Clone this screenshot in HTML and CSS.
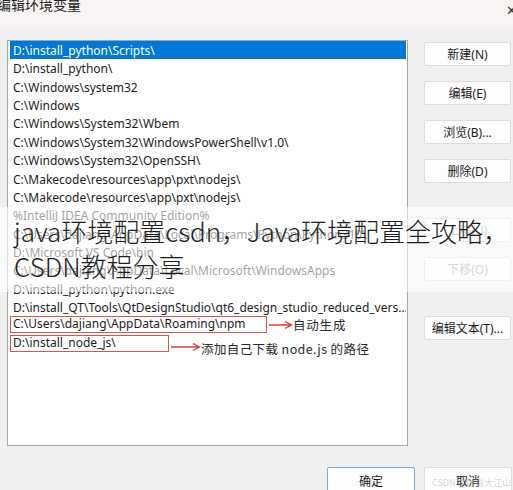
FILE: index.html
```html
<!DOCTYPE html>
<html lang="zh">
<head>
<meta charset="utf-8">
<link rel="stylesheet" href="styles.css">
</head>
<body>
<div class="dialog">
  <div class="titlebar">
    <span class="title">编辑环境变量</span>
    <span class="close">✕</span>
  </div>
  <div class="main">
    <div class="list">
      <div class="row sel">D:\install_python\Scripts\</div>
      <div class="row">D:\install_python\</div>
      <div class="row">C:\Windows\system32</div>
      <div class="row">C:\Windows</div>
      <div class="row">C:\Windows\System32\Wbem</div>
      <div class="row">C:\Windows\System32\WindowsPowerShell\v1.0\</div>
      <div class="row">C:\Windows\System32\OpenSSH\</div>
      <div class="row">C:\Makecode\resources\app\pxt\nodejs\</div>
      <div class="row">C:\Makecode\resources\app\pxt\nodejs\</div>
      <div class="row">%IntelliJ IDEA Community Edition%</div>
      <div class="row">C:\Users\dajiang\AppData\Local\Programs\Python\Python310\</div>
      <div class="row">D:\Microsoft VS Code\bin</div>
      <div class="row">C:\Users\dajiang\AppData\Local\Microsoft\WindowsApps</div>
      <div class="row">D:\install_python\python.exe</div>
      <div class="row">D:\install_QT\Tools\QtDesignStudio\qt6_design_studio_reduced_vers...</div>
      <div class="row note-row">
        <span class="mark mark-a">C:\Users\dajiang\AppData\Roaming\npm</span>
        <svg class="arrow arrow-a" viewBox="0 0 24 10"><path d="M0 5H22M16 1.5L22.5 5L16 8.5" fill="none" stroke="#d9413c" stroke-width="1.4"/></svg>
        <span class="note">自动生成</span>
      </div>
      <div class="row note-row">
        <span class="mark mark-b">D:\install_node_js\</span>
        <svg class="arrow arrow-b" viewBox="0 0 30 10"><path d="M0 5H28M22 1.5L28.5 5L22 8.5" fill="none" stroke="#d9413c" stroke-width="1.4"/></svg>
        <span class="note note-b">添加自己下载 node.js 的路径</span>
      </div>
    </div>
    <div class="side">
      <button class="btn">新建(N)</button>
      <button class="btn">编辑(E)</button>
      <button class="btn">浏览(B)...</button>
      <button class="btn">删除(D)</button>
      <button class="btn btn-gap dis">上移(U)</button>
      <button class="btn dis">下移(O)</button>
      <button class="btn btn-gap">编辑文本(T)...</button>
    </div>
  </div>
  <div class="footer">
    <button class="btn fbtn default">确定</button>
    <button class="btn fbtn">取消</button>
  </div>
  <div class="wm">CSDN @数据大江山</div>
  <div class="band">
    <p class="caption">java环境配置csdn，Java环境配置全攻略，<br>CSDN教程分享</p>
  </div>
</div>
</body>
</html>
```
FILE: styles.css
```css
* { box-sizing: border-box; }
html, body { margin: 0; padding: 0; }
body {
  background: #f0f0f0;
  font-family: "Noto Sans", "Noto Sans CJK SC", sans-serif;
  color: #1a1a1a;
  width: 513px;
  height: 490px;
  overflow: hidden;
}
.dialog { position: relative; width: 513px; height: 490px; }
.titlebar {
  height: 32px;
  background: linear-gradient(#f8f4f3 0, #f8f4f3 24px, #f0f0f0 32px);
  display: flex;
  justify-content: space-between;
  align-items: flex-start;
}
.title {
  font-family: "Noto Sans CJK SC", sans-serif;
  font-size: 14px;
  line-height: 14px;
  margin-top: -3px;
  margin-left: -3px;
  color: #222;
}
.close { font-size: 13px; margin-top: 1px; margin-right: -4px; color: #333; }
.main {
  display: flex;
  padding-left: 7px;
  margin-top: 8px;
}
.list {
  width: 401px;
  height: 406px;
  background: #fff;
  border: 1px solid #a6a6a6;
  padding: 0 1px 0 2px;
}
.row {
  height: 18.37px;
  line-height: 19px;
  font-size: 12px;
  padding-left: 3px;
  white-space: nowrap;
  overflow: hidden;
  color: #1c1c1c;
}
.row.sel { background: #0078d7; color: #fff; }
.note-row { display: flex; align-items: center; padding-left: 0; overflow: visible; }
.mark {
  border: 1.5px solid #d9534f;
  height: 17px;
  line-height: 14px;
  padding-left: 2px;
  flex: none;
}
.mark-a { width: 257px; margin-top: -2px; }
.mark-b { width: 159px; }
.arrow { flex: none; height: 10px; margin-left: 2px; }
.arrow-a { width: 24px; margin-top: -2px; }
.arrow-b { width: 30px; margin-top: 6px; }
.note {
  font-family: "Noto Sans CJK SC", sans-serif;
  font-size: 12.5px;
  letter-spacing: 0.8px;
  color: #2a2a2a;
  margin-left: 0;
  margin-top: -2px;
}
.note-b { margin-top: 10px; letter-spacing: 0.4px; }
.side {
  display: flex;
  flex-direction: column;
  margin-left: 16px;
  padding-top: 2px;
  gap: 15px;
}
.btn {
  width: 87px;
  height: 24px;
  background: #fdfdfd;
  border: 1px solid #dcdcdc;
  border-radius: 2px;
  font-family: "Noto Sans", "Noto Sans CJK SC", sans-serif;
  font-size: 12px;
  color: #1a1a1a;
  padding: 0;
}
.btn-gap { margin-top: 20px; }
.btn.dis { color: #9a9a9a; }
.footer {
  display: flex;
  justify-content: flex-end;
  gap: 9px;
  padding-right: 1px;
  margin-top: 21px;
}
.fbtn { width: 88px; height: 28px; }
.fbtn.default { border: 1px solid #7aa9d8; }
.wm {
  position: absolute;
  right: 2px;
  bottom: 1px;
  font-size: 9px;
  color: rgba(160,160,160,0.45);
  font-family: "Noto Sans CJK SC", sans-serif;
}
.band {
  position: absolute;
  left: 0;
  top: 207px;
  width: 513px;
  height: 85px;
  background: rgba(255,255,255,0.58);
}
.caption {
  margin: 0;
  padding: 6px 0 0 14px;
  font-family: "Noto Sans CJK SC", sans-serif;
  font-weight: 300;
  font-size: 26px;
  line-height: 35px;
  color: #1e1e1e;
  white-space: nowrap;
}
```
